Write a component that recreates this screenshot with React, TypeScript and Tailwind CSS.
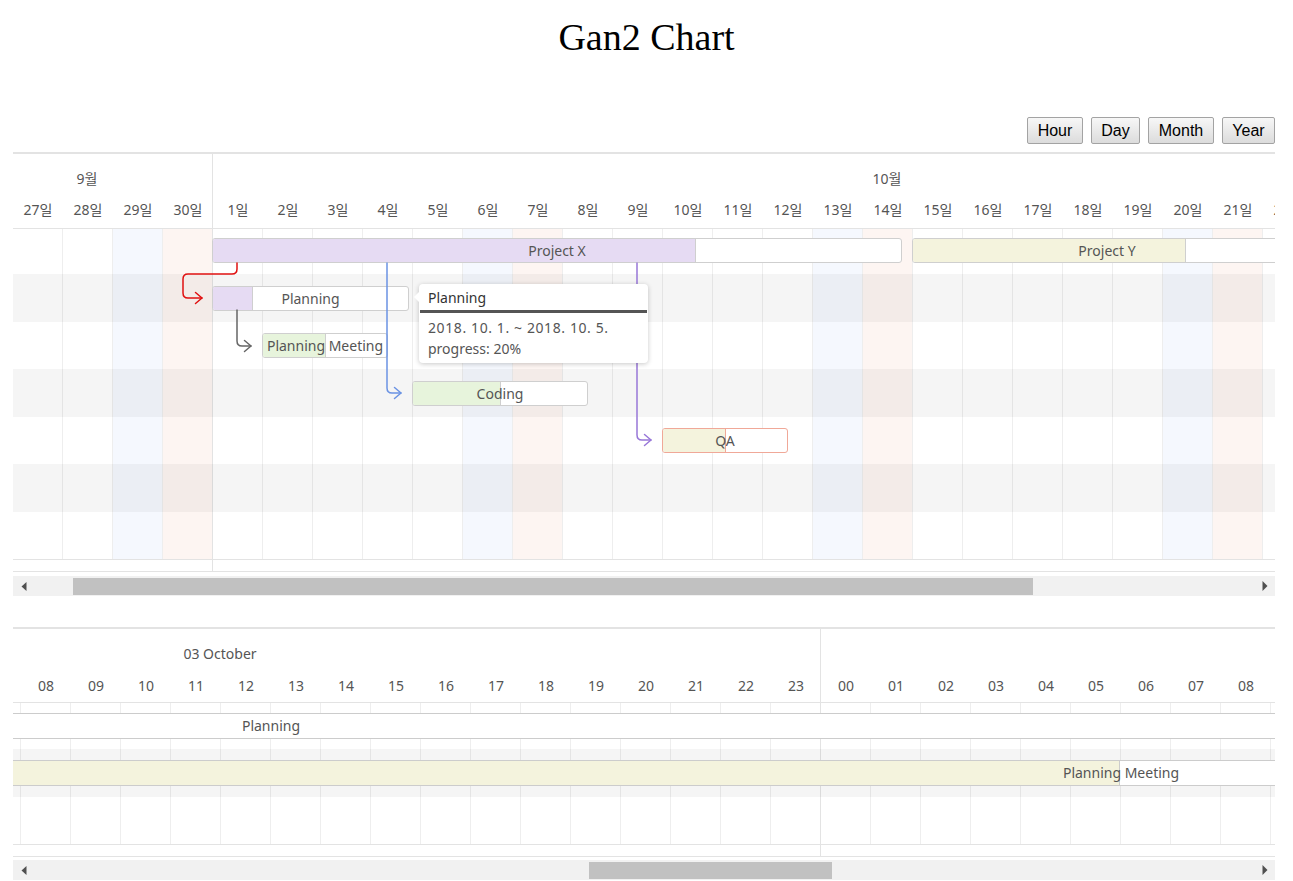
import React from "react";

type Day = { label: string; wk?: "sat" | "sun" };

const days: Day[] = [
  { label: "27일" },
  { label: "28일" },
  { label: "29일", wk: "sat" },
  { label: "30일", wk: "sun" },
  ...Array.from({ length: 22 }, (_, i) => {
    const d = i + 1;
    const wk: "sat" | "sun" | undefined = [6, 13, 20].includes(d) ? "sat" : [7, 14, 21].includes(d) ? "sun" : undefined;
    return { label: `${d}일`, wk };
  }),
];

const hours: string[] = [
  ...Array.from({ length: 16 }, (_, i) => String(i + 8).padStart(2, "0")),
  ...Array.from({ length: 10 }, (_, i) => String(i).padStart(2, "0")),
];

const rowClasses1 = ["h-[45px]", "h-[48px] bg-black/[0.04]", "h-[47px]", "h-[48px] bg-black/[0.04]", "h-[47px]", "h-[48px] bg-black/[0.04]", "h-[47px]"];
const rowClasses2 = ["h-[46px]", "h-[48px] bg-black/[0.04]", "h-[47px]"];

type Bar = { name: string; left: number; top: number; width: number; progress: number; fill: string; border: string };

// page coordinates minus chart origin (13, 229)
const bars: Bar[] = [
  { name: "Project X", left: 199, top: 9, width: 690, progress: 483, fill: "bg-[#e6dbf3]", border: "border-[#cfcfcf]" },
  { name: "Project Y", left: 899, top: 9, width: 390, progress: 273, fill: "bg-[#f4f3dd]", border: "border-[#cfcfcf]" },
  { name: "Planning", left: 199, top: 57, width: 197, progress: 40, fill: "bg-[#e6dbf3]", border: "border-[#cfcfcf]" },
  { name: "Planning Meeting", left: 249, top: 104, width: 126, progress: 63, fill: "bg-[#e7f4dc]", border: "border-[#cfcfcf]" },
  { name: "Coding", left: 399, top: 152, width: 176, progress: 88, fill: "bg-[#e7f4dc]", border: "border-[#cfcfcf]" },
  { name: "QA", left: 649, top: 199, width: 126, progress: 63, fill: "bg-[#f4f3dd]", border: "border-[#f0a898]" },
];

const textFont = "font-['Noto_Sans','Noto_Sans_CJK_KR',sans-serif]";

function GanttBar({ b }: { b: Bar }) {
  return (
    <div
      className={`absolute h-[25px] rounded-[3px] border ${b.border} bg-white overflow-hidden`}
      style={{ left: b.left, top: b.top, width: b.width }}
    >
      <div className={`absolute left-0 top-0 bottom-0 border-r ${b.border} ${b.fill}`} style={{ width: b.progress }} />
      <div className="absolute inset-0 flex items-center justify-center whitespace-nowrap text-[14px] leading-[20px] text-[#555]">
        {b.name}
      </div>
    </div>
  );
}

function Scrollbar({ thumbClass }: { thumbClass: string }) {
  return (
    <div className="ml-[13px] w-[1262px] h-[20px] bg-[#f1f1f1] flex">
      <div className="w-[17px] h-full flex items-center">
        <svg className="ml-[8px]" width="6" height="9" viewBox="0 0 6 9">
          <path d="M5.5 0 L0.5 4.5 L5.5 9 Z" fill="#505050" />
        </svg>
      </div>
      <div className="flex-1 h-full">
        <div className={`mt-[2px] h-[17px] bg-[#c1c1c1] ${thumbClass}`} />
      </div>
      <div className="w-[17px] h-full flex items-center">
        <svg className="ml-[4px]" width="6" height="10" viewBox="0 0 6 10">
          <path d="M0.5 0 L5.5 5 L0.5 10 Z" fill="#505050" />
        </svg>
      </div>
    </div>
  );
}

function DayChart() {
  return (
    <div className={`relative ml-[13px] w-[1262px] overflow-hidden border-t-2 border-[#e3e3e3] ${textFont} text-[#555]`}>
      {/* month divider (under body layers) */}
      <div className="absolute left-[199px] top-0 bottom-0 w-px bg-[#e3e3e3]" />
      {/* header */}
      <div className="h-[75px] border-b border-[#e3e3e3]">
        <div className="flex h-[40px] pt-[15px] text-[14px] leading-[20px]">
          <div className="w-[148px] shrink-0 text-center">9월</div>
          <div className="w-[1452px] shrink-0 text-center">10월</div>
        </div>
        <div className="flex h-[34px] pt-[6px] text-[14px] leading-[20px]">
          {days.map((d) => (
            <div key={d.label} className="w-[50px] shrink-0 text-center whitespace-nowrap">
              {d.label}
            </div>
          ))}
        </div>
      </div>
      {/* body */}
      <div className="relative h-[330px]">
        <div className="absolute inset-0 flex">
          {days.map((d, i) => (
            <div
              key={d.label}
              className={`w-[50px] shrink-0 h-full border-r ${i === 3 ? "border-[#e3e3e3]" : "border-[#eeeeee]"} ${
                d.wk === "sat" ? "bg-[#f5f8fe]" : d.wk === "sun" ? "bg-[#fdf5f2]" : "bg-white"
              }`}
            />
          ))}
        </div>
        <div className="absolute inset-0 flex flex-col">
          {rowClasses1.map((c, i) => (
            <div key={i} className={`shrink-0 ${c}`} />
          ))}
        </div>
        {bars.map((b) => (
          <GanttBar key={b.name} b={b} />
        ))}
        <svg className="absolute inset-0" width="1262" height="330" viewBox="13 229 1262 330" fill="none" strokeWidth="1.5" strokeLinecap="round" strokeLinejoin="round">
          <path d="M237 263 V269 Q237 274 232 274 H188 Q183 274 183 279 V293 Q183 298 188 298 H202" stroke="#e01010" />
          <path d="M195.5 292.5 L202 298 L195.5 303.5" stroke="#e01010" />
          <path d="M237 310 V341 Q237 346 242 346 H251" stroke="#666666" />
          <path d="M244.5 340.5 L251 346 L244.5 351.5" stroke="#666666" />
          <path d="M387 263 V388 Q387 393 392 393 H401" stroke="#6b93e3" />
          <path d="M394.5 387.5 L401 393 L394.5 398.5" stroke="#6b93e3" />
          <path d="M637 263 V435 Q637 440 642 440 H651" stroke="#9877d8" />
          <path d="M644.5 434.5 L651 440 L644.5 445.5" stroke="#9877d8" />
        </svg>
        {/* tooltip */}
        <div className="absolute left-[406px] top-[55px] w-[229px] h-[79px] rounded-[4px] bg-white shadow-[0_1px_5px_rgba(0,0,0,0.22)]">
          <div className="absolute -left-[5px] top-[8px] w-0 h-0 border-y-[5px] border-y-transparent border-r-[5px] border-r-white" />
          <div className="px-[9px] pt-[4px] text-[14px] leading-[20px] text-[#333]">Planning</div>
          <div className="mx-[1px] mt-[2px] h-[3px] bg-[#555]" />
          <div className="px-[9px] pt-[4px] text-[14px] leading-[21px] text-[#555] tracking-[0.6px]">2018. 10. 1. ~ 2018. 10. 5.</div>
          <div className="px-[9px] text-[14px] leading-[21px] text-[#555]">progress: 20%</div>
        </div>
      </div>
      {/* footer */}
      <div className="h-[13px] border-y border-[#e3e3e3]" />
    </div>
  );
}

function HourChart() {
  return (
    <div className={`relative ml-[13px] w-[1262px] overflow-hidden border-t-2 border-[#e3e3e3] ${textFont} text-[#555]`}>
      {/* day divider (under body layers) */}
      <div className="absolute left-[807px] top-0 bottom-0 w-px bg-[#e3e3e3]" />
      <div className="h-[74px] border-b border-[#e3e3e3]">
        <div className="flex h-[40px] pt-[15px] text-[14px] leading-[20px]">
          <div className="w-[414px] shrink-0 text-center">03 October</div>
        </div>
        <div className="flex h-[33px] pt-[7px] text-[14px] leading-[20px]">
          <div className="w-[8px] shrink-0" />
          {hours.map((h, i) => (
            <div key={i} className="w-[50px] shrink-0 text-center">
              {h}
            </div>
          ))}
        </div>
      </div>
      <div className="relative h-[141px]">
        <div className="absolute inset-0 flex">
          <div className="w-[8px] shrink-0 h-full border-r border-[#eeeeee] bg-white" />
          {hours.map((h, i) => (
            <div key={i} className={`w-[50px] shrink-0 h-full border-r bg-white ${i === 15 ? "border-[#e3e3e3]" : "border-[#eeeeee]"}`} />
          ))}
        </div>
        <div className="absolute inset-0 flex flex-col">
          {rowClasses2.map((c, i) => (
            <div key={i} className={`shrink-0 ${c}`} />
          ))}
        </div>
        {/* Planning (spans whole view) */}
        <div className="absolute left-[-20px] top-[10px] w-[1400px] h-[26px] border border-[#cccccc] bg-white">
          <div className="absolute top-0 bottom-0 left-0 w-[554px] flex items-center justify-center text-[14px] leading-[20px] whitespace-nowrap">
            Planning
          </div>
        </div>
        {/* Planning Meeting */}
        <div className="absolute left-[-20px] top-[57px] w-[1400px] h-[26px] border border-[#cccccc] bg-white">
          <div className="absolute left-0 top-0 bottom-0 w-[1126px] border-r border-[#cccccc] bg-[#f4f3dd]" />
          <div className="absolute top-0 bottom-0 left-0 w-[2254px] flex items-center justify-center text-[14px] leading-[20px] whitespace-nowrap">
            Planning Meeting
          </div>
        </div>
      </div>
      <div className="h-[13px] border-y border-[#e3e3e3]" />
    </div>
  );
}

export default function App() {
  const btn =
    "h-[27px] rounded-[2px] border border-[#a3a3a3] bg-linear-to-b from-[#f7f7f7] to-[#dcdcdc] font-['Liberation_Sans',Arial,sans-serif] text-[16px] leading-[20px] text-black";
  return (
    <div className="w-full min-h-[881px] bg-white">
      <h1 className="h-[74px] flex items-center justify-center font-['Liberation_Serif',serif] text-[38px] font-normal text-black">
        Gan2 Chart
      </h1>
      <div className="mt-[43px] flex justify-end gap-[8px] pr-[18px]">
        <button className={`${btn} w-[56px]`}>Hour</button>
        <button className={`${btn} w-[49px]`}>Day</button>
        <button className={`${btn} w-[66px]`}>Month</button>
        <button className={`${btn} w-[53px]`}>Year</button>
      </div>
      <div className="mt-[8px]">
        <DayChart />
      </div>
      <div className="mt-[4px]">
        <Scrollbar thumbClass="ml-[43px] w-[960px]" />
      </div>
      <div className="mt-[31px]">
        <HourChart />
      </div>
      <div className="mt-[3px]">
        <Scrollbar thumbClass="ml-[559px] w-[243px]" />
      </div>
    </div>
  );
}
